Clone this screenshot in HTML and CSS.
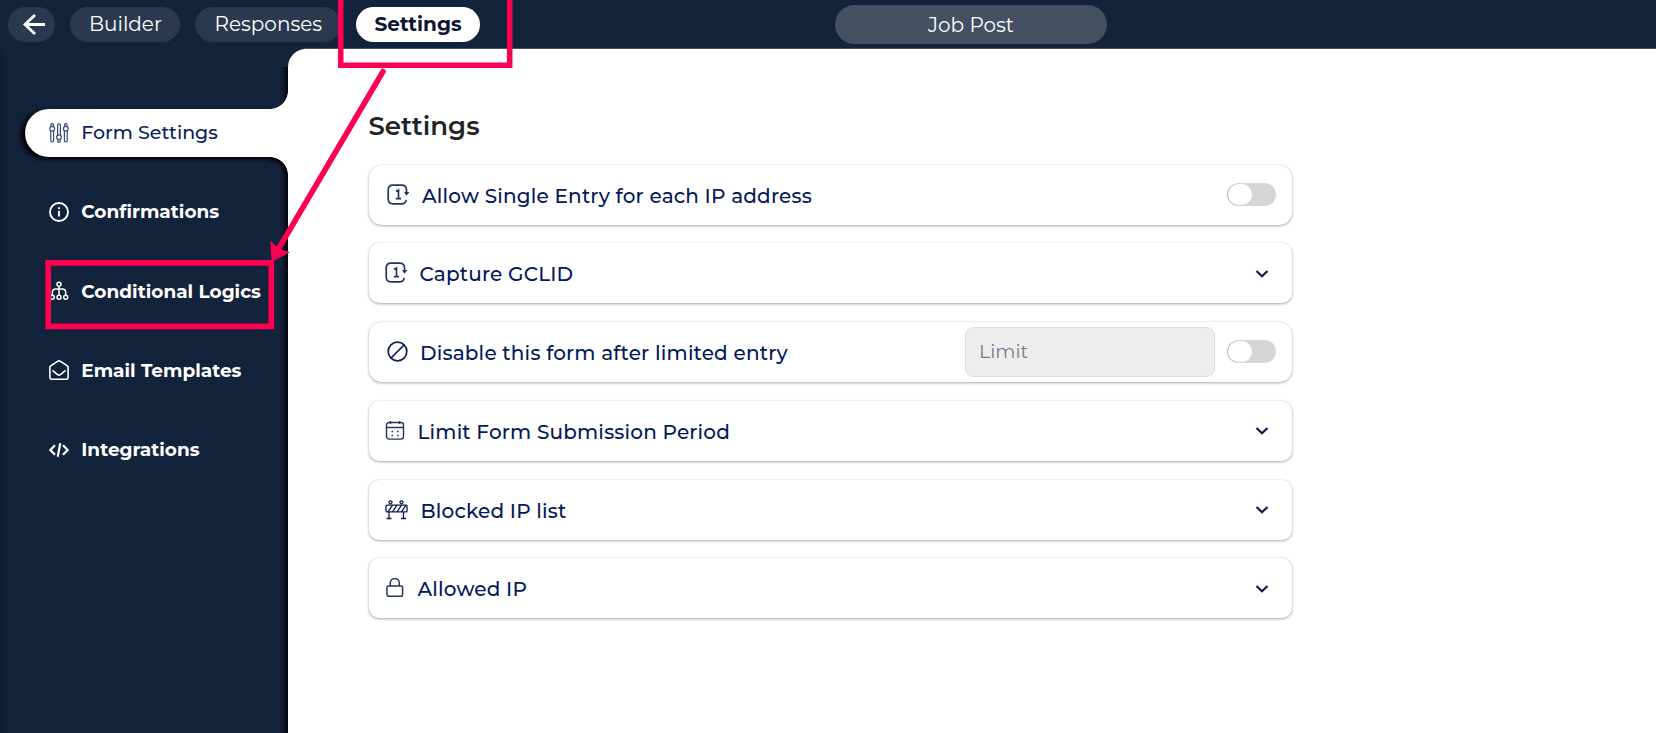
FILE: index.html
```html
<!DOCTYPE html>
<html lang="en">
<head>
<meta charset="utf-8">
<title>Job Post - Settings</title>
<link rel="stylesheet" href="styles.css">
</head>
<body>
<header class="topbar">
  <nav class="tabs">
    <a class="back"><svg width="24" height="24" viewBox="0 0 24 24" fill="none" stroke="#fff" stroke-width="2.8"><path d="M13 2 3 11.500l10 9.500M3 11.500h20"/></svg></a>
    <a class="tab tab-builder"><span>Builder</span></a>
    <a class="tab tab-responses"><span>Responses</span></a>
    <a class="tab tab-settings"><span>Settings</span></a>
  </nav>
  <div class="form-name"><span>Job Post</span></div>
</header>
<div class="layout">
  <aside class="sidebar">
    <a class="item active">
      <svg width="20" height="20" viewBox="0 0 20 20" fill="none" stroke="#3a4a78" stroke-width="1.2"><circle cx="3.2" cy="5.8" r="2.4"/><path d="M2 3.7V1.8a1.2 1.2 0 0 1 2.4 0v1.9M1.8 8v9.6a1.4 1.4 0 0 0 2.8 0V8"/><circle cx="10" cy="14.2" r="2.4"/><path d="M8.6 12V2.2a1.4 1.4 0 0 1 2.8 0V12M8.8 16.3v1.9a1.2 1.2 0 0 0 2.4 0v-1.9"/><circle cx="16.8" cy="5.8" r="2.4"/><path d="M15.6 3.7V1.8a1.2 1.2 0 0 1 2.4 0v1.9M15.4 8v9.6a1.4 1.4 0 0 0 2.8 0V8"/></svg>
      <span>Form Settings</span></a>
    <a class="item">
      <svg width="20" height="20" viewBox="0 0 20 20" fill="none" stroke="#fff" stroke-width="1.9"><circle cx="10" cy="10" r="9"/><path d="M10 9v5.500M10 5.300v2"/></svg>
      <span>Confirmations</span></a>
    <a class="item">
      <svg width="20" height="20" viewBox="0 0 20 20" fill="none" stroke="#fff" stroke-width="1.5"><circle cx="10" cy="3.2" r="2"/><path d="M10 5.2v9M3.3 14v-2.500q0-3.500 3.500-3.500h6.400q3.500 0 3.500 3.500V14"/><circle cx="3.300" cy="16.300" r="2"/><circle cx="10" cy="16.300" r="2"/><circle cx="16.700" cy="16.300" r="2"/></svg>
      <span>Conditional Logics</span></a>
    <a class="item">
      <svg width="20" height="20" viewBox="0 0 20 20" fill="none" stroke="#fff" stroke-width="1.600" stroke-linejoin="round" stroke-linecap="round"><path d="M.9 7.300v10q0 2 1.800 2h14.600q1.800 0 1.800-2v-10Q19 6.300 18 5.700L11.500 1.400q-1.500-1-3 0L2 5.700Q.9 6.300.9 7.300zM4 10.800l4.300 3.500q1.700 1.300 3.400 0L16 10.800"/></svg>
      <span>Email Templates</span></a>
    <a class="item">
      <svg width="20" height="20" viewBox="0 0 20 20" fill="none" stroke="#fff" stroke-width="2.200"><path d="m6 5.300-4.600 4.700L6 14.700M14 5.300l4.600 4.700-4.600 4.700M11.300 3.300 8.700 16.700"/></svg>
      <span>Integrations</span></a>
  </aside>
  <main class="main">
    <h1>Settings</h1>
    <section class="cards">
      <div class="card wide">
        <svg width="22" height="22" viewBox="0 0 22 22" fill="none" stroke="#22355f" stroke-width="1.700"><path d="M19.500 6Q19.500 1.200 14.500 1.200H6Q1.200 1.200 1.200 6v9q0 4.800 4.800 4.800h8.500q4 0 4.800-4M19.500 5.500v4M9 7.500l2.500-1.500v8.500M8.800 14.600h5.200"/><path d="M17 8h5.300l-2.800 3.800z" fill="#22355f" stroke="none"/></svg>
        <span>Allow Single Entry for each IP address</span>
        <i class="toggle"></i>
      </div>
      <div class="card">
        <svg width="22" height="22" viewBox="0 0 22 22" fill="none" stroke="#22355f" stroke-width="1.700"><path d="M19.500 6Q19.500 1.200 14.500 1.200H6Q1.200 1.200 1.200 6v9q0 4.800 4.800 4.800h8.500q4 0 4.800-4M19.500 5.500v4M9 7.500l2.500-1.500v8.500M8.800 14.600h5.200"/><path d="M17 8h5.300l-2.800 3.800z" fill="#22355f" stroke="none"/></svg>
        <span>Capture GCLID</span>
        <svg class="chev" width="14" height="10" viewBox="0 0 14 10"><path d="m1.500 2 5.500 5.300L12.500 2"/></svg>
      </div>
      <div class="card wide ban">
        <svg width="21" height="22" viewBox="0 0 21 22" fill="none" stroke="#0b1c4d" stroke-width="1.700"><circle cx="10.500" cy="10.500" r="9.300"/><path d="M4 17 17 4"/></svg>
        <span>Disable this form after limited entry</span>
        <input class="limit" type="text" placeholder="Limit" disabled>
        <i class="toggle"></i>
      </div>
      <div class="card cal">
        <svg width="20" height="20" viewBox="0 0 20 20" fill="none" stroke="#22355f" stroke-width="1.400"><rect x="1.500" y="1.500" width="17" height="16.600" rx="2.500"/><path d="M1.500 6.500h17M5.500 0v3M14.500 0v3"/><path d="M6.500 10.500h1.600M12 10.500h1.600M6.500 14.500h1.600M12 14.500h1.600" stroke-width="1.700"/></svg>
        <span>Limit Form Submission Period</span>
        <svg class="chev" width="14" height="10" viewBox="0 0 14 10"><path d="m1.500 2 5.500 5.300L12.500 2"/></svg>
      </div>
      <div class="card block">
        <svg width="23" height="20" viewBox="0 0 23 20" fill="none" stroke="#0b1c4d" stroke-width="1.300"><rect x="1" y="5.100" width="21" height="6.800" rx="1"/><path d="m3 11.900 4.500-6.800M7.500 11.900 12 5.100M12 11.900l4.500-6.800M16.500 11.900 21 5.100M4 11.900v6.600M18.500 11.900v6.600M1.500 18.500h5M16 18.500h5"/><circle cx="5.500" cy="2.300" r="1.500"/><circle cx="16.500" cy="2.300" r="1.500"/></svg>
        <span>Blocked IP list</span>
        <svg class="chev" width="14" height="10" viewBox="0 0 14 10"><path d="m1.500 2 5.500 5.300L12.500 2"/></svg>
      </div>
      <div class="card lock">
        <svg width="20" height="20" viewBox="0 0 20 20" fill="none" stroke="#22355f" stroke-width="1.500"><rect x="2" y="8" width="15.600" height="10.300" rx="1.500"/><path d="M5.300 8V5a4.500 4.500 0 0 1 9 0v3"/></svg>
        <span>Allowed IP</span>
        <svg class="chev" width="14" height="10" viewBox="0 0 14 10"><path d="m1.500 2 5.500 5.300L12.500 2"/></svg>
      </div>
    </section>
  </main>
</div>
<svg class="marks" width="1656" height="733" viewBox="0 0 1656 733" fill="none" stroke="#ff0050">
  <path d="M340.700-4V65.200H509.700V-4" stroke-width="5.500"/>
  <path d="M48.200 262.800H271.300V326.300H48.200z" stroke-width="5.700"/>
  <path d="M383 71.500 279 248" stroke-width="5.500" stroke-linecap="round"/>
  <path d="M270.300 241 276.500 246.500 281 249.500 290 252.300 271.500 262z" fill="#ff0050" stroke="none"/>
</svg>
</body>
</html>
```
FILE: styles.css
```css
* { box-sizing: border-box; }
body {
  margin: 0;
  width: 1656px;
  height: 733px;
  overflow: hidden;
  background: #14233c;
  color: #04185a;
  font-family: Montserrat, Inter, "Noto Sans", sans-serif;
}
span { white-space: nowrap; }
.topbar {
  height: 49px;
  display: grid;
  grid-template-columns: 835px 272px;
  background: linear-gradient(#4a556b, #4a556b) 304px 48px / 100% 1px no-repeat;
  color: #fff;
  font-size: 20px;
}
.tabs { display: flex; padding: 7px 0 0 8px; }
.back, .tab {
  height: 35px;
  border-radius: 18px;
  background: #2b384f;
  display: flex;
  align-items: center;
}
.back { width: 47px; padding-left: 14px; margin-right: 15px; }
.tab { padding: 0 0 1px 18px; }
.tab-builder { width: 110px; margin-right: 15px; padding-left: 19px; }
.tab-responses { width: 146px; margin-right: 15px; padding-left: 19.500px; }
.tab-settings { width: 124px; padding-left: 18.500px; background: #fff; color: #0e1433; font-weight: 700; }
.form-name {
  height: 39px;
  margin-top: 5px;
  border-radius: 20px;
  background: #444f62;
  display: flex;
  align-items: center;
  justify-content: center;
}
.layout { display: grid; grid-template-columns: 288px 1fr; height: 684px; }
.sidebar {
  display: flex;
  flex-direction: column;
  gap: 31.250px;
  padding: 60px 0 0 25px;
  background:
    linear-gradient(to right, transparent, rgba(3, 7, 13, .25) 40%, #03070d) right 18px / 9px 100% no-repeat,
    linear-gradient(to right, #0f1b32, #14233c) 0 0 / 7px 100% no-repeat #14233c;
  color: #fff;
  font-size: 18.500px;
  font-weight: 700;
}
.item { height: 48px; display: flex; align-items: center; padding: 0 0 1px 24.300px; gap: 12px; }
.item svg { flex: none; }
.active {
  position: relative;
  background: #fff;
  color: #0a1c5c;
  font-size: 19px;
  font-weight: 500;
  border-radius: 24px 0 0 24px;
  box-shadow: -4px 2px 5px #000;
  clip-path: inset(-20px 0 -20px -14px);
}
.active::before, .active::after {
  content: "";
  position: absolute;
  right: 0;
  width: 18px;
  height: 18px;
}
.active::before { top: -18px; background: radial-gradient(circle at 0 0, transparent 17.5px, #fff 18.2px); }
.active::after { bottom: -18px; background: radial-gradient(circle at 0 100%, transparent 12px, rgba(0, 0, 0, .75) 17.5px, #fff 18.2px); }
.main { background: #fff; border-top-left-radius: 18px; padding: 60px 0 0 80.500px; }
h1 { margin: 0; height: 34px; line-height: 34px; font-size: 26px; font-weight: 600; color: #212529; }
.cards { display: grid; gap: 18.750px; margin-top: 21.600px; width: 923.500px; padding-left: .5px; }
.card {
  height: 60px;
  border-radius: 10px;
  background: #fff;
  box-shadow: 0 1px 3px rgba(0, 0, 0, .34), 0 0 1px rgba(0, 0, 0, .15);
  display: flex;
  align-items: center;
  padding: 0 23px 0 16px;
  gap: 12.500px;
  font-size: 20px;
  letter-spacing: .18px;
  font-weight: 500;
}
.card > svg { flex: none; }
.card > span { margin-right: auto; padding-top: 2px; }
.wide { padding: 0 16px 0 18px; border-radius: 13px; }
.wide:first-child { gap: 13px; }
.ban { gap: 12px; }
.chev { fill: none; stroke: #0b1c4d; stroke-width: 2.200; margin-top: 1px; }
.toggle { width: 49px; height: 23px; border-radius: 12px; background: #d5d5d5; padding: 1px 0 0 1px; margin-top: -1px; }
.toggle::before { content: ""; display: block; width: 24px; height: 21px; border-radius: 11px; background: #fff; box-shadow: -1px 0 0 #a9bbdd; }
.limit {
  width: 250px;
  height: 50px;
  border: 1px solid #dcdcdc;
  border-radius: 9px;
  background: #ededed;
  padding: 0 13px 2px;
  font: 19px Montserrat, Inter, sans-serif;
}
.limit::placeholder { color: #747e8b; }
.marks { position: absolute; left: 0; top: 0; pointer-events: none; }
```
